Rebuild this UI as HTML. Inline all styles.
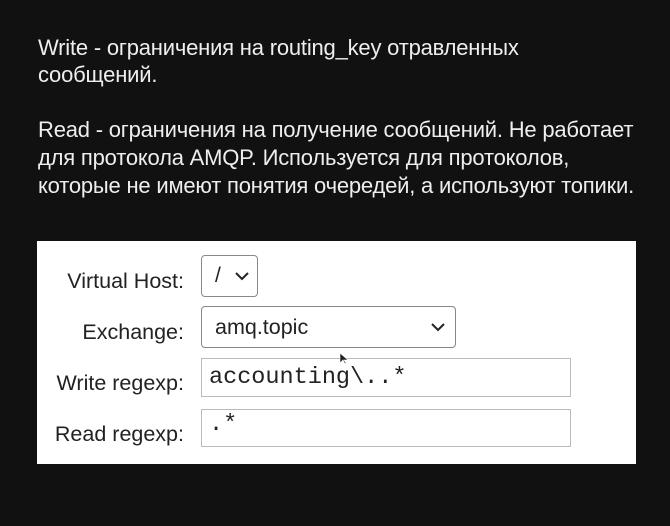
<!DOCTYPE html>
<html><head><meta charset="utf-8"><style>
body{margin:0;width:670px;height:526px;background:#111;overflow:hidden;font-family:"Liberation Sans",sans-serif;position:relative}
.t{position:absolute;left:38px;color:#eee;font-size:22px;letter-spacing:-0.2px;white-space:nowrap}
.box{position:absolute;left:37px;top:241px;width:599px;height:223px;background:#fff}
.l{position:absolute;color:#222;font-size:21.5px;text-align:right;white-space:nowrap}
.c{position:absolute;box-sizing:border-box;border:1px solid #bbb;background:#fff}
.s{border:1px solid #888;border-radius:4px}
.m{font-family:"Liberation Mono",monospace;font-size:23.5px;color:#222;padding-left:7px}
</style></head><body>
<div class="t" style="top:35px">Write - ограничения на routing_key отравленных</div>
<div class="t" style="top:62px">сообщений.</div>
<div class="t" style="top:117px">Read - ограничения на получение сообщений. Не работает</div>
<div class="t" style="top:145px">для протокола AMQP. Используется для протоколов,</div>
<div class="t" style="top:173px">которые не имеют понятия очередей, а используют топики.</div>
<div class="box"></div>
<div class="l" style="top:269px;left:0;width:184px">Virtual Host:</div>
<div class="l" style="top:320px;left:0;width:184px">Exchange:</div>
<div class="l" style="top:371px;left:0;width:184px">Write regexp:</div>
<div class="l" style="top:422px;left:0;width:184px">Read regexp:</div>
<div class="c s" style="left:201px;top:255px;width:57px;height:42px"><span style="position:absolute;left:13px;top:8px;font-size:21px;color:#222">/</span>
<svg style="position:absolute;left:33px;top:16px" width="14" height="9"><path d="M1 1L7 7L13 1" fill="none" stroke="#222" stroke-width="2"/></svg></div>
<div class="c s" style="left:201px;top:306px;width:255px;height:42px"><span style="position:absolute;left:13px;top:8px;font-size:21.5px;color:#222">amq.topic</span>
<svg style="position:absolute;left:229px;top:16px" width="14" height="9"><path d="M1 1L7 7L13 1" fill="none" stroke="#222" stroke-width="2"/></svg></div>
<div class="c m" style="left:201px;top:358px;width:370px;height:39px;line-height:37px">accounting\..*</div>
<div class="c m" style="left:201px;top:409px;width:370px;height:38px;line-height:30px">.*</div>
<svg style="position:absolute;left:339px;top:352px" width="10" height="14"><path d="M1 1L1 11L4 8L6 12L7 11L5 8L9 8Z" fill="#222" stroke="#fff" stroke-width=".6"/></svg>
</body></html>
